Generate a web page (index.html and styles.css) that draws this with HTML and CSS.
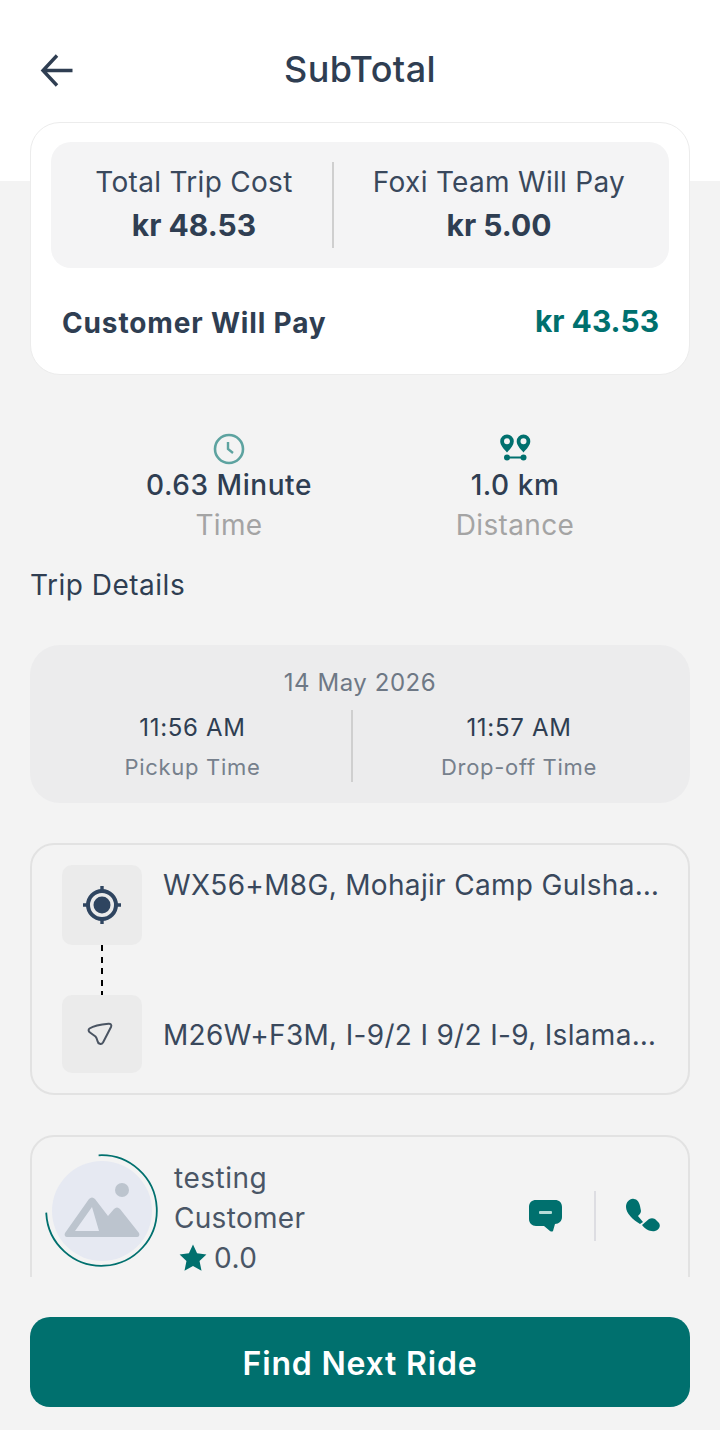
FILE: index.html
```html
<!DOCTYPE html>
<html lang="en">

<head>
    <meta charset="UTF-8">
    <title>SubTotal</title>
    <meta name="viewport" content="width=device-width, initial-scale=1.0" />
    <link rel="stylesheet" href="styles.css">
</head>

<body>
    <div class="app">
        <div class="scroll">
            <div class="header">
                <svg class="back" width="36" height="36" viewBox="0 0 36 36" fill="none" stroke="#2f3e52" stroke-width="3.4">
                    <path d="M33.5 18.5H5M18 3.5L4 18.5L18 33.5" />
                </svg>
                <div class="header-title">SubTotal</div>
            </div>

            <div class="cost-card">
                <div class="cost-box">
                    <div class="cost-col cost-col-left">
                        <div class="cost-label">Total Trip Cost</div>
                        <div class="cost-value">kr 48.53</div>
                    </div>
                    <div class="cost-divider"></div>
                    <div class="cost-col cost-col-right">
                        <div class="cost-label">Foxi Team Will Pay</div>
                        <div class="cost-value">kr 5.00</div>
                    </div>
                </div>
                <div class="pay-row">
                    <div class="pay-label">Customer Will Pay</div>
                    <div class="pay-value">kr 43.53</div>
                </div>
            </div>

            <div class="stats">
                <div class="stat stat-time">
                    <svg class="stat-icon" width="32" height="32" viewBox="0 0 32 32" fill="none" stroke="#5da3a0">
                        <circle cx="16" cy="16" r="14" stroke-width="2.6" />
                        <path d="M15 9V16L20 20" stroke-width="2.4" />
                    </svg>
                    <div class="stat-value">0.63 Minute</div>
                    <div class="stat-label">Time</div>
                </div>
                <div class="stat stat-distance">
                    <svg class="stat-icon" width="32" height="32" viewBox="0 0 32 32" fill="#00706e">
                        <path fill-rule="evenodd" d="M8 1.5a6.8 6.8 0 0 1 6.8 6.8c0 4-3.6 7.600-6.800 11.200C4.800 15.900 1.200 12.300 1.200 8.300A6.800 6.800 0 0 1 8 1.500ZM8 5.300a3 3 0 1 0 0 6a3 3 0 0 0 0-6Z" />
                        <path fill-rule="evenodd" d="M24.500 1.500a6.800 6.800 0 0 1 6.800 6.800c0 4-3.600 7.600-6.800 11.200C21.300 15.900 17.700 12.300 17.700 8.300A6.800 6.800 0 0 1 24.500 1.500ZM24.500 5.300a3 3 0 1 0 0 6a3 3 0 0 0 0-6Z" />
                        <circle cx="8" cy="24.500" r="3" />
                        <circle cx="24.500" cy="24.500" r="3" />
                        <rect x="8" y="23.500" width="16" height="2" />
                    </svg>
                    <div class="stat-value">1.0 km</div>
                    <div class="stat-label">Distance</div>
                </div>
            </div>

            <div class="section-title">Trip Details</div>

            <div class="time-card">
                <div class="time-date">14 May 2026</div>
                <div class="time-row">
                    <div class="time-col">
                        <div class="time-value">11:56 AM</div>
                        <div class="time-label">Pickup Time</div>
                    </div>
                    <div class="time-divider"></div>
                    <div class="time-col">
                        <div class="time-value">11:57 AM</div>
                        <div class="time-label">Drop-off Time</div>
                    </div>
                </div>
            </div>

            <div class="route-card">
                <div class="route-row route-row-top">
                    <div class="route-icon">
                        <svg width="42" height="42" viewBox="0 0 42 42" fill="none" stroke="#2f4560">
                            <circle cx="21" cy="21" r="14" stroke-width="4" />
                            <circle cx="21" cy="21" r="8.500" fill="#2f4560" stroke="none" />
                            <path d="M21 2V8M21 34V40M2 21H8M34 21H40" stroke-width="3.400" />
                        </svg>
                    </div>
                    <div class="route-text">WX56+M8G, Mohajir Camp Gulsha…</div>
                </div>
                <div class="route-dots"></div>
                <div class="route-row route-row-bottom">
                    <div class="route-icon route-icon-small">
                        <svg class="nav-icon" width="26" height="24" viewBox="0 0 26 24" fill="none" stroke="#4a5462" stroke-width="2" stroke-linejoin="round">
                            <path d="M2.500 6.500C1 7.500 1.500 9.500 3 10.500L8.500 14.500C9.500 15.500 10 17 10.500 19C11 22 14.500 23 16 20.500L24 5C25 2.800 23.500 1.500 21.500 1.700C15 2.300 8 3 2.500 6.500Z" />
                        </svg>
                    </div>
                    <div class="route-text route-text-low">M26W+F3M, I-9/2 I 9/2 I-9, Islama…</div>
                </div>
            </div>

            <div class="user-card">
                <div class="avatar">
                    <svg width="114" height="114" viewBox="0 0 114 114" fill="none">
                        <circle cx="57" cy="57" r="50" fill="#e6e9f2" />
                        <circle cx="56.500" cy="56.500" r="55.300" stroke="#00706e" stroke-width="1.800" stroke-dasharray="261 87" transform="rotate(-93 56.500 56.500)" />
                        <circle cx="77" cy="36" r="7" fill="#bcc4ce" />
                        <path fill-rule="evenodd" fill="#bcc4ce" d="M20 79L44 45C46 43 48 43 50 45L63 62L69 55C71 53 73 53 75 55L94 79C95 81 94 83 92 83H22C20 83 19 81 20 79ZM30 77H54L47 53Z" />
                    </svg>
                </div>
                <div class="user-info">
                    <div class="user-name">testing</div>
                    <div class="user-role">Customer</div>
                    <div class="user-rating">
                        <svg width="28" height="28" viewBox="0 0 24 24" fill="#00706e">
                            <path d="M12 0.500L15.500 8L23.500 9L17.600 14.600L19.300 23L12 18.800L4.700 23L6.400 14.600L0.500 9L8.500 8Z" />
                        </svg>
                        <span>0.0</span>
                    </div>
                </div>
                <div class="user-actions">
                    <svg width="36" height="34" viewBox="0 0 36 34" fill="#00706e">
                        <path d="M8 1H27C31 1 34 3.500 34 8V18C34 22 31 25 27 25H27L25 32C24 33 23 32.500 22 32L16 27H8C4 27 1 24 1 20V8C1 3.500 4 1 8 1Z" />
                        <rect x="11" y="12" width="13" height="3" rx="1" fill="#b5dcd8" />
                    </svg>
                    <div class="action-divider"></div>
                    <svg width="36" height="36" viewBox="0 0 36 36" fill="#00706e">
                        <path d="M1 9C1 4 5 0 9 1C12 1 14 4 15 8L16 13C16 15 14 17 13 18L18 24L15 26C8 22 1 15 1 9Z" />
                        <path d="M17 27L24 21C26 20 28 20 30 21L34 25C36 28 34 32 30 33C25 34 20 31 17 27Z" />
                    </svg>
                </div>
            </div>
        </div>

        <div class="footer">
            <button class="button">Find Next Ride</button>
        </div>
    </div>
</body>

</html>
```

FILE: styles.css
```css
* {
    box-sizing: border-box;
}

body {
    margin: 0;
    padding: 0;
    font-family: 'Inter', sans-serif;
    background-color: #f3f3f3;
    color: #2f3e52;
}

.app {
    width: 720px;
    height: 1430px;
    display: flex;
    flex-direction: column;
    overflow: hidden;
}

.scroll {
    height: 1277px;
    overflow: hidden;
    padding: 0 30px;
    background: linear-gradient(#ffffff 181px, #f3f3f3 181px);
}

.header {
    height: 122px;
    padding-top: 47px;
    position: relative;
}

.back {
    position: absolute;
    left: 9px;
    top: 52px;
}

.header-title {
    text-align: center;
    font-size: 36px;
    font-weight: 500;
    line-height: 44px;
    letter-spacing: 0.4px;
}

.cost-card {
    height: 253px;
    background-color: white;
    border: 1px solid #ececec;
    border-radius: 30px;
    padding: 19px 20px 0;
}

.cost-box {
    height: 126px;
    background-color: #f4f4f5;
    border-radius: 20px;
    display: flex;
    align-items: center;
}

.cost-col {
    text-align: center;
    padding-bottom: 3px;
}

.cost-col-left {
    width: 281px;
    padding-left: 5px;
}

.cost-col-right {
    flex: 1;
    padding-right: 5px;
}

.cost-divider {
    width: 2px;
    height: 86px;
    background-color: #cfcfcf;
}

.cost-label {
    font-size: 28px;
    line-height: 40px;
    letter-spacing: 0.3px;
    color: #39485c;
}

.cost-value {
    font-size: 30px;
    font-weight: 700;
    line-height: 40px;
    margin-top: 3px;
}

.pay-row {
    display: flex;
    justify-content: space-between;
    align-items: center;
    padding: 33px 10px 0 11px;
}

.pay-label {
    font-size: 28px;
    font-weight: 700;
    letter-spacing: 0.85px;
    margin-top: 5px;
}

.pay-value {
    font-size: 30px;
    font-weight: 700;
    color: #00706e;
}

.stats {
    display: flex;
    margin-top: 58px;
}

.stat {
    text-align: center;
    width: 286px;
}

.stat-time {
    margin-left: 56px;
    width: 286px;
}

.stat-icon {
    display: block;
    margin: 0 auto;
}

.stat-value {
    font-size: 28px;
    font-weight: 500;
    line-height: 38px;
    letter-spacing: 0.55px;
    margin-top: 1px;
}

.stat-label {
    font-size: 28px;
    line-height: 42px;
    letter-spacing: 0.35px;
    color: #a4a4a4;
}

.section-title {
    font-size: 28px;
    line-height: 40px;
    letter-spacing: 0.5px;
    margin-top: 19px;
}

.time-card {
    height: 158px;
    margin-top: 40px;
    background-color: #ececed;
    border-radius: 30px;
    padding-top: 22px;
}

.time-date {
    text-align: center;
    font-size: 24px;
    line-height: 32px;
    letter-spacing: 0.55px;
    color: #6e7885;
}

.time-row {
    display: flex;
    margin-top: 11px;
}

.time-col {
    width: 321px;
    padding-left: 4px;
    text-align: center;
    padding-top: 2px;
}

.time-col:last-child {
    width: 337px;
    padding-left: 0;
    padding-right: 5px;
}

.time-divider {
    width: 2px;
    height: 72px;
    background-color: #cfcfcf;
}

.time-value {
    font-size: 24px;
    line-height: 32px;
    letter-spacing: 0.7px;
}

.time-label {
    font-size: 22px;
    line-height: 32px;
    letter-spacing: 0.7px;
    margin-top: 7px;
    color: #76808c;
}

.route-card {
    height: 252px;
    margin-top: 40px;
    border: 2px solid #e2e2e2;
    border-radius: 24px;
    padding: 20px 30px 0;
}

.route-row {
    display: flex;
    gap: 21px;
}

.route-row-bottom {
    align-items: center;
}

.route-icon {
    flex: none;
    width: 80px;
    height: 80px;
    background-color: #ebebeb;
    border-radius: 10px;
    display: flex;
    align-items: center;
    justify-content: center;
}

.route-icon-small {
    height: 78px;
}

.nav-icon {
    margin-right: 4px;
}

.route-text {
    font-size: 28px;
    line-height: 40px;
    letter-spacing: 0.32px;
    white-space: nowrap;
    color: #39485c;
}

.route-text-low {
    padding-top: 2px;
}

.route-dots {
    width: 2px;
    height: 50px;
    margin-left: 39px;
    background: repeating-linear-gradient(#000000 0, #000000 6px, transparent 6px, transparent 11.500px);
}

.user-card {
    height: 200px;
    margin-top: 40px;
    border: 2px solid #e2e2e2;
    border-radius: 24px;
    padding: 17px 27px 0 13px;
    display: flex;
    align-items: flex-start;
}

.avatar {
    flex: none;
    width: 114px;
    height: 114px;
}

.avatar svg {
    display: block;
}

.user-info {
    margin-left: 15px;
    font-size: 28px;
    line-height: 40px;
    letter-spacing: 0.5px;
    flex: 1;
    margin-top: 4px;
}

.user-name,
.user-role {
    color: #4a5666;
}

.user-role {
    letter-spacing: 0.3px;
}

.user-rating {
    display: flex;
    align-items: center;
    gap: 7px;
    padding-left: 5px;
    color: #4a5666;
}

.user-actions {
    display: flex;
    align-items: center;
    margin-top: 37px;
}

.action-divider {
    width: 2px;
    height: 50px;
    margin: 0 29px 0 30px;
    background-color: #dddde2;
}

.footer {
    flex: 1;
    padding: 40px 30px 0;
}

.button {
    width: 100%;
    height: 90px;
    padding-top: 4px;
    background-color: #00706e;
    border: none;
    border-radius: 20px;
    color: white;
    font-family: 'Inter', sans-serif;
    font-size: 32px;
    font-weight: 600;
    letter-spacing: 0.8px;
    cursor: pointer;
}
```
